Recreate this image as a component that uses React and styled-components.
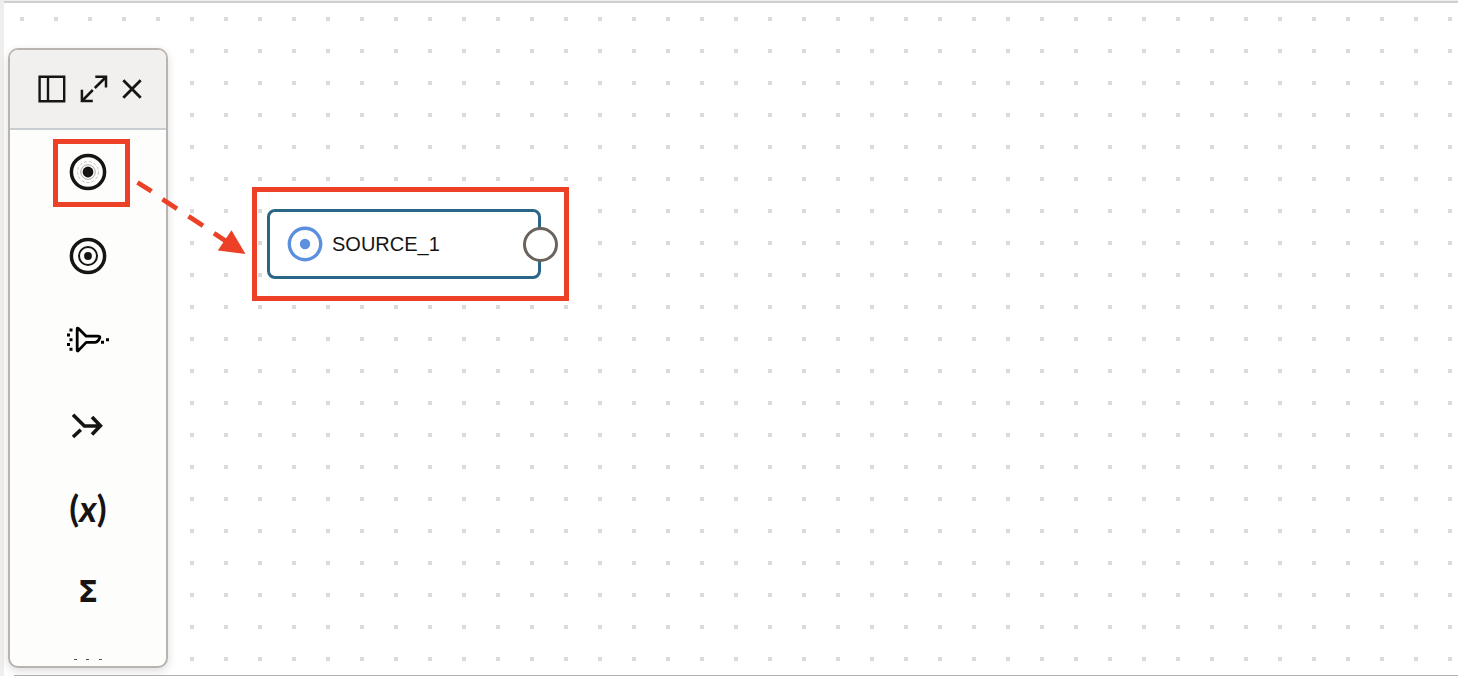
import React from "react";
import styled, { createGlobalStyle } from "styled-components";

const GlobalStyle = createGlobalStyle`
  * { box-sizing: border-box; }
  body {
    margin: 0;
    background: #efeeed;
    font-family: "Liberation Sans", Arial, sans-serif;
  }
  svg { display: block; }
`;

const Page = styled.div`
  display: flex;
  flex-direction: column;
  height: 100vh;
  padding: 1px 0 0 4px;
`;

const Canvas = styled.main`
  position: relative;
  flex: 1;
  min-height: 0;
  display: flex;
  align-items: stretch;
  padding: 45px 4px 7px;
  border-top: 2px solid #cfcfce;
  background-color: #ffffff;
  background-image: conic-gradient(from 90deg at 30px 28px, #dadada 25%, transparent 0);
  background-size: 34px 32px;
  background-position: 20px 18px;
`;

const BottomPanel = styled.footer`
  height: 1px;
  background: #b3b2b1;
  border-left: 10px solid #ffffff;
`;

const Palette = styled.aside`
  display: flex;
  flex-direction: column;
  width: 160px;
  overflow: hidden;
  border: 2px solid #bab4b0;
  border-radius: 10px;
  background: #fdfdfb;
  box-shadow: 0 3px 10px rgba(0, 0, 0, 0.14);
`;

const PaletteHeader = styled.header`
  display: flex;
  flex: none;
  align-items: center;
  gap: 14px;
  height: 80px;
  padding-left: 28px;
  background: #f2f0ef;
  border-bottom: 2px solid #c9ced2;
`;

const IconButton = styled.button`
  display: flex;
  align-items: center;
  justify-content: center;
  padding: 0;
  border: 0;
  background: none;
  color: #161513;
  cursor: pointer;
`;

const OperatorList = styled.div`
  flex: 1;
  min-height: 0;
  overflow: hidden;
`;

const OperatorButton = styled(IconButton)`
  width: 100%;
  height: 84px;
`;

const Symbol = styled.span`
  font-family: ${(p) => (p.$bold ? '"DejaVu Sans"' : "Lato")}, sans-serif;
  font-size: ${(p) => (p.$bold ? 30 : 36)}px;
  font-weight: 700;
  line-height: 40px;
`;

const Node = styled.div`
  position: absolute;
  left: 263px;
  top: 206px;
  display: flex;
  align-items: center;
  gap: 9px;
  width: 274px;
  height: 70px;
  padding-left: 17px;
  border: 3px solid #2a6688;
  border-radius: 8px;
  background: #ffffff;
  color: #161513;
  font-size: 20px;
  line-height: 24px;
`;

const Port = styled.button`
  position: absolute;
  right: -20px;
  top: 15px;
  width: 35px;
  height: 35px;
  padding: 0;
  border: 3px solid #6b635d;
  border-radius: 50%;
  background: #ffffff;
`;

const Highlight = styled.div`
  position: absolute;
  left: ${(p) => p.$x}px;
  top: ${(p) => p.$y}px;
  width: ${(p) => p.$w}px;
  height: ${(p) => p.$h}px;
  border: 5px solid #ec4126;
  pointer-events: none;
`;

const DragArrow = styled.svg`
  position: absolute;
  left: 128px;
  top: 172px;
  pointer-events: none;
`;

const PanelIcon = () => (
  <svg width="28" height="28" viewBox="0 0 28 28" fill="none" stroke="currentColor" strokeWidth="2.4">
    <path d="M1.6 1.8H26.2V26.2H1.6ZM10 1.8V26.2" />
  </svg>
);

const ExpandIcon = () => (
  <svg width="28" height="28" viewBox="0 0 28 28" fill="none" stroke="currentColor" strokeWidth="2.5">
    <path d="M15.3 1.8H26V12.6M26 2L14.8 13M1.9 14.8V26H12.8M2 26L12.8 15" />
  </svg>
);

const CloseIcon = () => (
  <svg width="20" height="20" viewBox="0 0 20 20" fill="none" stroke="currentColor" strokeWidth="2.8">
    <path d="M1.3 1.3L18.7 18.7M18.7 1.3L1.3 18.7" />
  </svg>
);

const SourceIcon = () => (
  <svg width="38" height="38" viewBox="0 0 38 38" fill="none" stroke="currentColor">
    <circle cx="19" cy="19" r="16.6" strokeWidth="3.5" />
    <circle cx="19" cy="19" r="10.5" strokeWidth="0.6" strokeDasharray="3 2" opacity="0.4" />
    <circle cx="19" cy="19" r="7.3" strokeWidth="0.7" opacity="0.5" />
    <circle cx="19" cy="19" r="5.4" fill="currentColor" stroke="none" />
  </svg>
);

const TargetIcon = () => (
  <svg width="38" height="38" viewBox="0 0 38 38" fill="none" stroke="currentColor">
    <circle cx="19" cy="19" r="16.6" strokeWidth="3.5" />
    <circle cx="19" cy="19" r="9" strokeWidth="2" />
    <circle cx="19" cy="19" r="3.9" fill="currentColor" stroke="none" />
  </svg>
);

const FunnelIcon = () => (
  <svg width="44" height="28" viewBox="66 326 44 28" fill="none" stroke="#000000">
    <path
      d="M77.2 328.8Q77.2 327.6 78.5 328.6L86.2 336.2H98.2Q100.9 336.2 99.3 338.8Q97.4 342.4 95 342.4H86.2L78.5 350.4Q77.2 351.6 77.2 350.3Z"
      strokeWidth="2.8"
      strokeLinejoin="round"
    />
    <path
      d="M69.5 330h3M67 335h3M69.5 339.7h3M67 344.5h3M69.5 349.3h3M101 342.3h3M106 339.8h3"
      strokeWidth="3"
    />
  </svg>
);

const MergeIcon = () => (
  <svg width="40" height="40" viewBox="68 404 40 40" fill="none" stroke="currentColor" strokeWidth="3.6">
    <path d="M73 414.8L84.4 426H100M92 416.9L100.4 425.8L92 434.6M80.8 429.8L73 437" />
  </svg>
);

const MoreIcon = () => (
  <svg width="36" height="36" viewBox="0 0 36 36" stroke="#555452" strokeWidth="1">
    <path d="M4 1.5h3M16 1.5h3M29 1.5h3" />
  </svg>
);

const NodeSourceIcon = () => (
  <svg width="36" height="36" viewBox="0 0 36 36" fill="none" stroke="#5c90de">
    <circle cx="18" cy="18" r="15.7" strokeWidth="3.4" />
    <circle cx="18" cy="18" r="10" strokeWidth="0.6" strokeDasharray="1 4" opacity="0.4" />
    <circle cx="18" cy="18" r="5.2" fill="#5c90de" stroke="none" />
  </svg>
);

const operators = [
  { label: "Source", icon: <SourceIcon /> },
  { label: "Target", icon: <TargetIcon /> },
  { label: "Filter", icon: <FunnelIcon /> },
  { label: "Join", icon: <MergeIcon /> },
  { label: "Expression", icon: <Symbol>(<i>x</i>)</Symbol> },
  { label: "Aggregate", icon: <Symbol $bold>Σ</Symbol> },
  { label: "More operators", icon: <MoreIcon /> },
];

export default function App() {
  return (
    <>
      <GlobalStyle />
      <Page>
        <Canvas>
          <Palette>
            <PaletteHeader>
              <IconButton aria-label="Dock panel"><PanelIcon /></IconButton>
              <IconButton aria-label="Expand panel"><ExpandIcon /></IconButton>
              <IconButton aria-label="Close panel"><CloseIcon /></IconButton>
            </PaletteHeader>
            <OperatorList>
              {operators.map(({ label, icon }) => (
                <OperatorButton key={label} aria-label={label}>{icon}</OperatorButton>
              ))}
            </OperatorList>
          </Palette>

          <Node>
            <NodeSourceIcon />
            <span>SOURCE_1</span>
            <Port aria-label="Output port" />
          </Node>

          <Highlight $x={49} $y={136} $w={77} $h={68} />
          <Highlight $x={248} $y={184} $w={317} $h={114} />
          <DragArrow width="120" height="90" viewBox="132 175 120 90">
            <path
              d="M137.5 182.5L151.5 191.3M162.5 199.3L177 208.7M188.5 216.3L203 225.7M214 233.3L228 242.5"
              stroke="#ec4126"
              strokeWidth="4.8"
            />
            <path d="M231.5 230.3L245.5 254L217.8 250.6Z" fill="#ec4126" />
          </DragArrow>
        </Canvas>
        <BottomPanel />
      </Page>
    </>
  );
}
